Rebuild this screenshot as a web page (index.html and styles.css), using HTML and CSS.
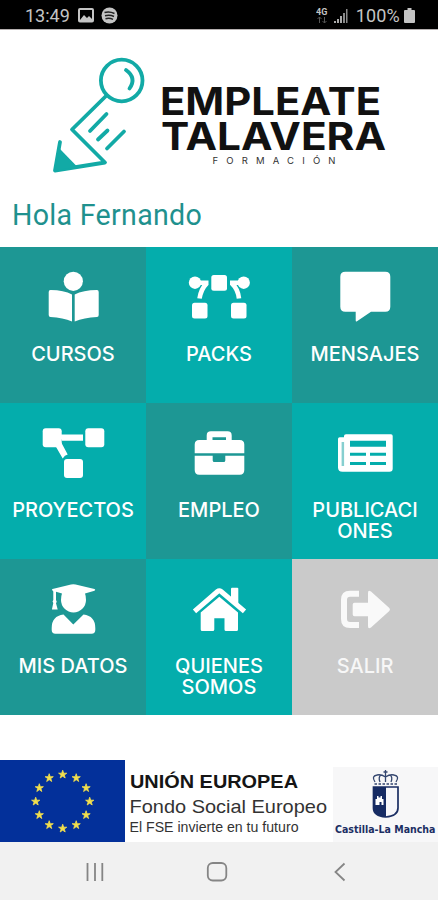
FILE: index.html
```html
<!DOCTYPE html>
<html lang="es">
<head>
    <meta charset="UTF-8">
    <meta name="viewport" content="width=device-width, initial-scale=1.0">
    <title>Empleate Talavera</title>
    <link rel="stylesheet" href="styles.css">
</head>
<body>
    <div class="status">
        <span class="status-time">13:49</span>
        <svg class="status-left" width="40" height="18" viewBox="0 0 40 18">
            <rect x="1" y="2" width="14" height="12.500" rx="1" fill="none" stroke="#c4c4c4" stroke-width="2"/>
            <path d="M2 13l4-5 3 3 2-2 4 4v2H2z" fill="#c4c4c4"/>
            <circle cx="31.500" cy="8.500" r="8" fill="#c4c4c4"/>
            <path d="M26.500 5.500q5-1.500 10 1M27 8.700q5-1.200 9 .8M27.500 11.700q4-1 7.500.6" fill="none" stroke="#222" stroke-width="1.400"/>
        </svg>
        <svg class="status-right" width="33" height="18" viewBox="0 0 33 18">
            <text x="0" y="7.500" class="status-4g">4G</text>
            <path d="M3.500 16v-6M1.500 12l2-2 2 2M8.500 10v6M6.500 14l2 2 2-2" fill="none" stroke="#555"/>
            <path d="M18 16v-2h2v2zM21 16v-4h2v4zM24 16V9h2v7z" fill="#aaa"/>
            <path d="M27 16V6h2v10zM30 16V2h1.500v14z" fill="#888"/>
        </svg>
        <span class="status-percent">100%</span>
        <svg class="status-battery" width="11" height="17" viewBox="0 0 11 17">
            <path d="M3.500 1h4v2H10q1 0 1 1v11q0 1-1 1H1q-1 0-1-1V4q0-1 1-1h2.500z" fill="#c4c4c4"/>
        </svg>
    </div>

    <div class="header">
        <svg class="logo" width="438" height="150" viewBox="0 30 438 150" role="img" aria-label="Empleate Talavera Formación">
            <g fill="none" stroke="#12aaa6" stroke-width="3.800" stroke-linecap="round" stroke-linejoin="round">
                <circle cx="121.700" cy="80.500" r="20.800"/>
                <path d="M126 70Q137 78 129.500 88.500"/>
                <path d="M106 96L72 129.500 105 162.500 55 170.500 60 142"/>
                <path d="M106.500 114L90 131M107.500 130.500L98 139.500M124 131.500L107 148.500"/>
            </g>
            <path d="M60 149L77 166.500 55 170.500z" fill="#12aaa6"/>
            <text x="160" y="115" textLength="221" lengthAdjust="spacingAndGlyphs" class="logo-name">EMPLEATE</text>
            <text x="161" y="150" textLength="225" lengthAdjust="spacingAndGlyphs" class="logo-name">TALAVERA</text>
            <text x="212.500" y="164" textLength="123" class="logo-sub">FORMACIÓN</text>
        </svg>
        <div class="greeting">Hola Fernando</div>
    </div>

    <div class="menu">
        <div class="tile dark">
            <svg class="icon" viewBox="0 0 62 52">
                <circle cx="31.300" cy="10.300" r="9.600"/>
                <path d="M8.500 19Q22 19 30 23.500V50.500Q21 46.500 8.500 46Q6.700 46 6.700 44V21Q6.700 19 8.500 19zM55 19Q41 19 32.700 23.500V50.500Q42 46.500 55 46Q56.700 46 56.700 44V21Q56.700 19 55 19z"/>
            </svg>
            <span>CURSOS</span>
        </div>
        <div class="tile light">
            <svg class="icon" viewBox="0 0 62 52">
                <circle cx="7" cy="11.700" r="6.200"/>
                <circle cx="55.700" cy="11.700" r="6.200"/>
                <rect x="23.300" y="4" width="15.700" height="15.700" rx="2.500"/>
                <rect x="4" y="31.700" width="15.500" height="15.700" rx="2.500"/>
                <rect x="43" y="31.700" width="15.500" height="15.700" rx="2.500"/>
                <path d="M7 11.700H20.500M19 12Q13 18 11.500 27.500M55.700 11.700H42M43.500 12Q50 18 51 27.500" fill="none" stroke="#fff" stroke-width="4.600"/>
            </svg>
            <span>PACKS</span>
        </div>
        <div class="tile dark">
            <svg class="icon" viewBox="0 0 62 52">
                <path d="M11.300.7h40q5 0 5 5v30q0 5-5 5H37L23 50.300q-1.300.8-1.300-1V40.700H11.300q-5 0-5-5v-30q0-5 5-5z"/>
            </svg>
            <span>MENSAJES</span>
        </div>
        <div class="tile light">
            <svg class="icon" viewBox="0 0 62 52">
                <rect x=".7" y="1.300" width="19" height="19" rx="3"/>
                <rect x="43.300" y="1.300" width="19" height="19" rx="3"/>
                <rect x="22" y="32" width="19" height="19" rx="3"/>
                <path d="M17 7.500H41v6.200H20zM13.500 19L19 15l6.700 12.500q-3 .5-5 4z"/>
            </svg>
            <span>PROYECTOS</span>
        </div>
        <div class="tile dark">
            <svg class="icon" viewBox="0 0 62 52">
                <path d="M6.700 26.300V17.500q0-4.500 4.500-4.500h7.500V8.500q0-4.200 4.200-4.200h16.600q4.200 0 4.200 4.200V13h8q4.600 0 4.600 4.500v8.800zM24.500 13H38v-2.800H24.500z" fill-rule="evenodd"/>
                <path d="M6.700 28.700h18v4.700q0 1.600 1.600 1.600h9.400q1.600 0 1.600-1.600v-4.700h19V43q0 4.700-4.600 4.700H11.200q-4.500 0-4.500-4.700z"/>
            </svg>
            <span>EMPLEO</span>
        </div>
        <div class="tile light">
            <svg class="icon" viewBox="0 0 62 52">
                <path d="M12 7.300H57q1.700 0 1.700 1.700V41.500q0 3.200-3.200 3.200H8.500Q4 44.700 4 40.500V12q0-1.700 1.700-1.700H10V9q0-1.700 2-1.700zM16 13.700v6H52v-6zM16 25.700v3H32v-3zM36 25.700v3H52v-3zM16 35v2.900H32V35zM36 35v2.900H52V35z" fill-rule="evenodd"/>
                <path d="M7.600 15h2.500v24H7.600z" fill="#86cfd0"/>
            </svg>
            <span>PUBLICACI<br>ONES</span>
        </div>
        <div class="tile dark">
            <svg class="icon" viewBox="0 0 62 52">
                <path d="M10.500 6L29 1.500Q31.300 1 33.600 1.500L52.500 6q1.500.8 0 1.700L43 10.500Q44 13 44 17A12.500 12.500 0 0 1 19 17Q19 13 20 10.500L14 8.800V17q1.500 1.700 0 3.200l1.700 6.200H9.900L11.300 20q-1.500-1.500 0-3V8.500L10.500 7.600Q9.300 6.800 10.500 6z"/>
                <path d="M21.500 31.500L31.300 41.500 41.500 31.500Q53.300 33 53.300 45v2q0 3.700-3.700 3.700H13.400q-3.700 0-3.700-3.700v-2Q9.700 33 21.500 31.500z"/>
            </svg>
            <span>MIS DATOS</span>
        </div>
        <div class="tile light">
            <svg class="icon" viewBox="0 0 62 52">
                <path d="M43 16V5.700q0-1 1-1h5.300q1 0 1 1V22z"/>
                <path d="M6.500 28.300L29.500 8.500q1.800-1.500 3.600 0L56.500 28.300" fill="none" stroke="#fff" stroke-width="5"/>
                <path d="M12.700 29.500L31.300 13.800 50 29.500V46.500q0 1.500-1.500 1.500H38q-1.500 0-1.500-1.500V35.300H26.300V46.500q0 1.500-1.500 1.500H14.200q-1.500 0-1.500-1.500z"/>
            </svg>
            <span>QUIENES<br>SOMOS</span>
        </div>
        <div class="tile gray">
            <svg class="icon" viewBox="0 0 62 52">
                <path d="M25 10.700H16q-6 0-6 6V36q0 6 6 6h9" fill="none" stroke="#f9f9f9" stroke-width="6"/>
                <path d="M20.500 19.700H34V10q0-3.500 3-1.500L55.300 25q1.400 1.500 0 3L37 44.500q-3 2-3-1.500V33.300H20.500q-1.800 0-1.800-1.800v-10q0-1.800 1.800-1.800z"/>
            </svg>
            <span>SALIR</span>
        </div>
    </div>

    <div class="sponsors">
        <svg class="flag" width="125" height="82" viewBox="0 0 125 82">
            <defs>
                <path id="star" fill="#f4e04d" stroke="#f4e04d" stroke-width=".8" d="M0-4.300L1-1.300H4.100L1.600.5 2.500 3.500 0 1.700-2.500 3.500-1.600.5-4.100-1.300H-1z"/>
            </defs>
            <rect width="125" height="82" fill="#03309a"/>
            <use href="#star" x="62.700" y="14.500"/>
            <use href="#star" x="76.200" y="18"/>
            <use href="#star" x="86.100" y="28"/>
            <use href="#star" x="89.700" y="41.500"/>
            <use href="#star" x="86.100" y="55"/>
            <use href="#star" x="76.200" y="65"/>
            <use href="#star" x="62.700" y="68.500"/>
            <use href="#star" x="49.200" y="65"/>
            <use href="#star" x="39.300" y="55"/>
            <use href="#star" x="35.700" y="41.500"/>
            <use href="#star" x="39.300" y="28"/>
            <use href="#star" x="49.200" y="18"/>
        </svg>
        <svg class="fund" width="208" height="82" viewBox="125 0 208 82">
            <text x="130" y="28" textLength="168" lengthAdjust="spacingAndGlyphs" class="fund-title">UNIÓN EUROPEA</text>
            <text x="129.500" y="53" textLength="197.500" lengthAdjust="spacingAndGlyphs" class="fund-name">Fondo Social Europeo</text>
            <text x="129.500" y="72" textLength="169" lengthAdjust="spacingAndGlyphs" class="fund-note">El FSE invierte en tu futuro</text>
        </svg>
        <svg class="region" width="105" height="75" viewBox="333 767 105 75">
            <g fill="none" stroke="#34466f">
                <path d="M375 782Q371 776 377 775Q381 774 385.500 777Q390 774 394 775Q400 776 396 782M380 782Q378 777 381 775M391 782Q393 777 390 775M385.500 770v12M383.500 772h4" stroke-width="1.300"/>
                <path d="M374.500 784H397" stroke-width="1.700" stroke-dasharray="2.500 1.500"/>
            </g>
            <path d="M373.500 787H398V808Q398 816 385.700 817Q373.500 816 373.500 808z" fill="#f7f7fa" stroke="#1b2e63" stroke-width="1.700"/>
            <path d="M373.500 787H386V817Q373.500 816 373.500 808z" fill="#162b63"/>
            <path d="M375.500 805V799h1.500v-3h1.500v1.500h2V796h1.500v3h1.500v6h-2v-3h-2v3z" fill="#fff"/>
            <text x="335" y="832.500" textLength="100.500" lengthAdjust="spacingAndGlyphs" class="region-name">Castilla-La Mancha</text>
        </svg>
    </div>

    <div class="navbar">
        <svg width="438" height="58" viewBox="0 842 438 58" fill="none" stroke="#858585" stroke-width="1.800">
            <path d="M87.500 863v18M95 863v18M102.300 863v18"/>
            <rect x="207.800" y="863" width="18.500" height="17.500" rx="5"/>
            <path d="M344.500 863.500L335.500 872l9 8.500"/>
        </svg>
    </div>
</body>
</html>
```
FILE: styles.css
```css
body {
    margin: 0;
    width: 438px;
    height: 900px;
    display: flex;
    flex-direction: column;
    overflow: hidden;
    background-color: white;
    font-family: Roboto, sans-serif;
}
svg {
    display: block;
    flex-shrink: 0;
}
.status {
    box-sizing: border-box;
    height: 30px;
    display: flex;
    align-items: center;
    padding: 2px 23px 0 25px;
    background-color: black;
    border-bottom: 1px solid #b5b0b0;
    color: #c4c4c4;
    font-size: 18px;
}
.status-time {
    width: 53px;
}
.status-right {
    margin-left: auto;
}
.status-4g {
    font: bold 9px Roboto, sans-serif;
    fill: #c4c4c4;
}
.status-percent {
    margin: 0 4px 0 7px;
    letter-spacing: 0.2px;
}
.header {
    height: 217px;
}
.logo-name {
    font: 700 37.8px Inter, sans-serif;
    fill: #111;
}
.logo-sub {
    font: 400 9.5px Inter, sans-serif;
    fill: #333;
}
.greeting {
    padding-left: 12px;
    margin-top: 19px;
    font-size: 28.6px;
    line-height: 33px;
    letter-spacing: 0.3px;
    color: #1f918e;
}
.menu {
    display: grid;
    grid-template-columns: repeat(3, 146px);
    grid-auto-rows: 156px;
}
.tile {
    box-sizing: border-box;
    display: flex;
    flex-direction: column;
    align-items: center;
    padding-top: 24px;
    color: white;
    text-align: center;
    font-family: Inter, sans-serif;
    font-size: 20px;
    font-weight: 500;
    line-height: 21px;
}
.dark {
    background-color: #1d9794;
}
.light {
    background-color: #04adac;
}
.gray {
    background-color: #cacaca;
    color: #f7f7f7;
}
.icon {
    width: 62px;
    height: 52px;
    margin-bottom: 21px;
    overflow: visible;
    fill: white;
}
.gray .icon {
    fill: #f9f9f9;
}
.sponsors {
    display: flex;
    align-items: flex-end;
    height: 82px;
    margin-top: 45px;
}
.fund-title {
    font: bold 19px "Liberation Sans", Arial, sans-serif;
    fill: #151515;
}
.fund-name {
    font: 19px "Liberation Sans", Arial, sans-serif;
    fill: #333;
}
.fund-note {
    font: 14px "Liberation Sans", Arial, sans-serif;
    fill: #333;
}
.region {
    background-color: #f7f7f8;
}
.region-name {
    font: bold 11px "DejaVu Sans", sans-serif;
    fill: #1b2e63;
}
.navbar {
    height: 58px;
    background-color: #f1f1f1;
}
```
